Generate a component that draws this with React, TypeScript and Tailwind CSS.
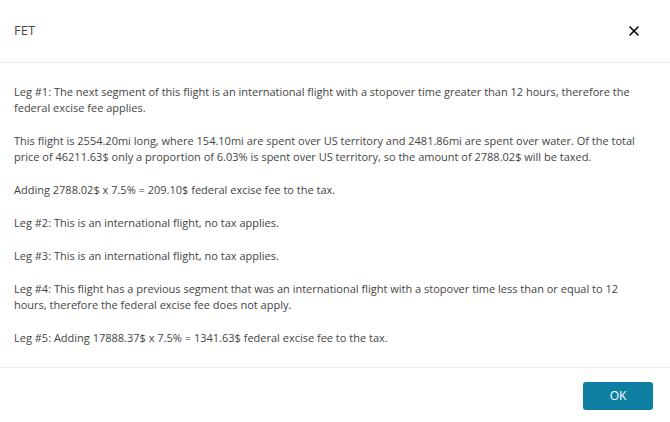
import { X } from "lucide-react";

const paragraphs = [
  "Leg #1: The next segment of this flight is an international flight with a stopover time greater than 12 hours, therefore the federal excise fee applies.",
  "This flight is 2554.20mi long, where 154.10mi are spent over US territory and 2481.86mi are spent over water. Of the total price of 46211.63$ only a proportion of 6.03% is spent over US territory, so the amount of 2788.02$ will be taxed.",
  "Adding 2788.02$ x 7.5% = 209.10$ federal excise fee to the tax.",
  "Leg #2: This is an international flight, no tax applies.",
  "Leg #3: This is an international flight, no tax applies.",
  "Leg #4: This flight has a previous segment that was an international flight with a stopover time less than or equal to 12 hours, therefore the federal excise fee does not apply.",
  "Leg #5: Adding 17888.37$ x 7.5% = 1341.63$ federal excise fee to the tax.",
];

export default function App() {
  return (
    <div className="w-[670px] h-[422px] bg-white font-['Open_Sans',sans-serif] text-[#333] flex flex-col">
      <div className="h-[63px] flex items-center justify-between pl-[14px] pr-[28px] border-b border-[#e9e9e9]">
        <div className="text-[13px] text-[#4a4a4a]">FET</div>
        <X size={16} strokeWidth={2.3} className="text-black" />
      </div>
      <div className="flex-1 pl-[14px] pr-[24px] pt-[21px] flex flex-col gap-[17px] text-[11px] leading-[16px] text-[#444]">
        {paragraphs.map((p, i) => (
          <p key={i}>{p}</p>
        ))}
      </div>
      <div className="h-[55px] border-t border-[#ececec] flex items-start justify-end pr-[17px] pt-[14px]">
        <button className="w-[70px] h-[28px] rounded-[3px] bg-[#0e7fa1] text-white text-[12px]">
          OK
        </button>
      </div>
    </div>
  );
}
